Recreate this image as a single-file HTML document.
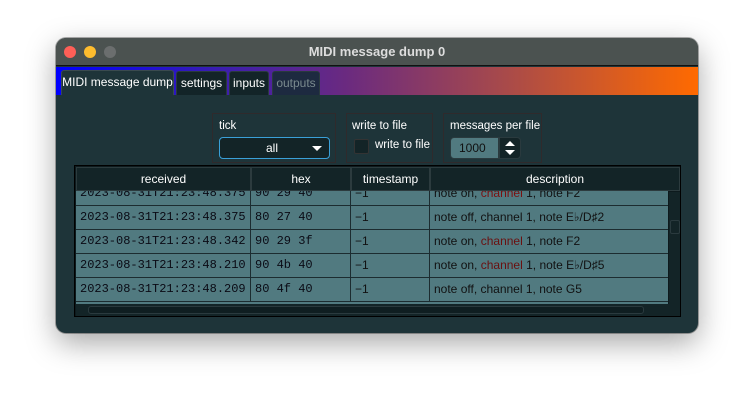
<!DOCTYPE html>
<html><head><style>
*{margin:0;padding:0;box-sizing:border-box}
body{width:755px;height:408px;background:#fff;position:relative;overflow:hidden;font-family:"Liberation Sans",sans-serif}
.win{position:absolute;left:56px;top:38px;width:642px;height:295px;border-radius:10px;background:#1e3439;overflow:hidden;box-shadow:0 10px 30px rgba(0,0,0,.35),0 0 0 1px rgba(0,0,0,.3)}
.tb{position:absolute;left:0;top:0;width:642px;height:28px;background:#4b5250;border-bottom:1px solid #111}
.tb .t{position:absolute;left:0;right:0;top:6px;text-align:center;color:#ddd;font-weight:bold;font-size:13px}
.dot{position:absolute;top:8px;width:12px;height:12px;border-radius:50%}
.grad{position:absolute;left:0;top:29px;width:642px;height:28px;background:linear-gradient(90deg,#0000ff 0%,#3a1db0 25%,#6a2a80 45%,#a84a4a 70%,#ff6a00 100%)}
.tab{position:absolute;top:33px;height:24px;background:#132428;border:1px solid #2a3a3e;border-bottom:none;border-radius:3px 3px 0 0;color:#fff;font-size:12px;line-height:22px;text-align:center}
.grp{position:absolute;top:75px;height:50px;border:1px solid #2f2a2c;color:#fff;font-size:11.5px}
.abs{position:absolute}
.tbl{position:absolute;left:18px;top:127px;width:607px;height:152px;background:#0d1a1d;border:1px solid #000;overflow:hidden}
.hd{position:absolute;top:1px;height:24px;background:#132427;border:1px solid #2c3b3e;color:#fff;font-size:12px;text-align:center;line-height:22px}
.row{position:absolute;left:1px;width:592px;height:24px;background:#517a80;border-bottom:1px solid #1c2c30}
.c{position:absolute;top:0;height:23px;line-height:23px;font-size:12px;color:#111;border-right:1px solid #1c2c30;padding-left:4px;white-space:nowrap}
.m{font-family:"Liberation Mono",monospace;font-size:12px;color:#0a0a14}
</style></head><body>
<div class="win">
 <div class="tb"><div class="dot" style="left:8px;background:#ff5f57"></div><div class="dot" style="left:28px;background:#febc2e"></div><div class="dot" style="left:48px;background:#6b6e6e"></div><div class="t">MIDI message dump 0</div></div>
 <div class="grad"></div>
 <div class="tab" style="left:5px;width:113px;top:32px;height:25px;background:#1e3439;border-color:#3a4a4e">MIDI message dump</div>
 <div class="tab" style="left:120px;width:51px">settings</div>
 <div class="tab" style="left:173px;width:40px">inputs</div>
 <div class="tab" style="left:216px;width:48px;color:#7a8a8e;background:#1d2a40">outputs</div>

 <div class="grp" style="left:156px;width:124px"><div class="abs" style="left:6px;top:6px">tick</div>
  <div class="abs" style="left:6px;top:23px;width:111px;height:22px;border:1px solid #3aa0d8;border-radius:4px;background:#132427;color:#fff;font-size:12px;line-height:20px;padding-left:46px">all<span style="position:absolute;right:7px;top:8px;border-left:5px solid transparent;border-right:5px solid transparent;border-top:5px solid #fff"></span></div></div>
 <div class="grp" style="left:290px;width:87px"><div class="abs" style="left:5px;top:6px">write to file</div>
  <div class="abs" style="left:7px;top:25px;width:15px;height:15px;background:#132427;border:1px solid #333;border-radius:2px"></div><div class="abs" style="left:28px;top:25px">write to file</div></div>
 <div class="grp" style="left:387px;width:99px"><div class="abs" style="left:6px;top:6px">messages per file</div>
  <div class="abs" style="left:6px;top:23px;width:49px;height:22px;background:#517a80;border-radius:4px 0 0 4px;border:1px solid #2a3a3e;color:#111;font-size:12px;line-height:20px;padding-left:8px">1000</div>
  <div class="abs" style="left:55px;top:23px;width:22px;height:22px;background:#132427;border:1px solid #2a3a3e;border-radius:0 4px 4px 0"><span class="abs" style="left:5px;top:3px;border-left:5px solid transparent;border-right:5px solid transparent;border-bottom:5px solid #fff"></span><span class="abs" style="left:5px;top:12px;border-left:5px solid transparent;border-right:5px solid transparent;border-top:5px solid #fff"></span></div></div>

 <div class="tbl">
  <div class="row" style="top:16px"><div class="c m" style="left:0;width:175px">2023-08-31T21:23:48.375</div><div class="c m" style="left:175px;width:100px">90 29 40</div><div class="c" style="left:275px;width:79px">−1</div><div class="c" style="left:354px;width:238px;border:none">note on, <span style="color:#7a1010">channel</span> 1, note F2</div></div>
  <div class="row" style="top:40px"><div class="c m" style="left:0;width:175px">2023-08-31T21:23:48.375</div><div class="c m" style="left:175px;width:100px">80 27 40</div><div class="c" style="left:275px;width:79px">−1</div><div class="c" style="left:354px;width:238px;border:none">note off, channel 1, note E♭/D♯2</div></div>
  <div class="row" style="top:64px"><div class="c m" style="left:0;width:175px">2023-08-31T21:23:48.342</div><div class="c m" style="left:175px;width:100px">90 29 3f</div><div class="c" style="left:275px;width:79px">−1</div><div class="c" style="left:354px;width:238px;border:none">note on, <span style="color:#6a1010">channel</span> 1, note F2</div></div>
  <div class="row" style="top:88px"><div class="c m" style="left:0;width:175px">2023-08-31T21:23:48.210</div><div class="c m" style="left:175px;width:100px">90 4b 40</div><div class="c" style="left:275px;width:79px">−1</div><div class="c" style="left:354px;width:238px;border:none">note on, <span style="color:#6a1010">channel</span> 1, note E♭/D♯5</div></div>
  <div class="row" style="top:112px"><div class="c m" style="left:0;width:175px">2023-08-31T21:23:48.209</div><div class="c m" style="left:175px;width:100px">80 4f 40</div><div class="c" style="left:275px;width:79px">−1</div><div class="c" style="left:354px;width:238px;border:none">note off, channel 1, note G5</div></div>
  <div class="row" style="top:136px;height:3px"></div>
  <div class="hd" style="left:1px;width:175px">received</div>
  <div class="hd" style="left:176px;width:100px">hex</div>
  <div class="hd" style="left:276px;width:79px">timestamp</div>
  <div class="hd" style="left:355px;width:250px">description</div>
  <div class="abs" style="left:594px;top:26px;width:12px;height:112px;background:#132427"><div class="abs" style="left:1px;top:28px;width:10px;height:14px;border:1px solid #2a3a3e;border-radius:2px"></div></div>
  <div class="abs" style="left:1px;top:138px;width:605px;height:12px;background:#132427"><div class="abs" style="left:12px;top:2px;width:556px;height:8px;border:1px solid #2a3a3e;border-radius:3px;background:#0f1e21"></div></div>
 </div>
</div>
</body></html>
